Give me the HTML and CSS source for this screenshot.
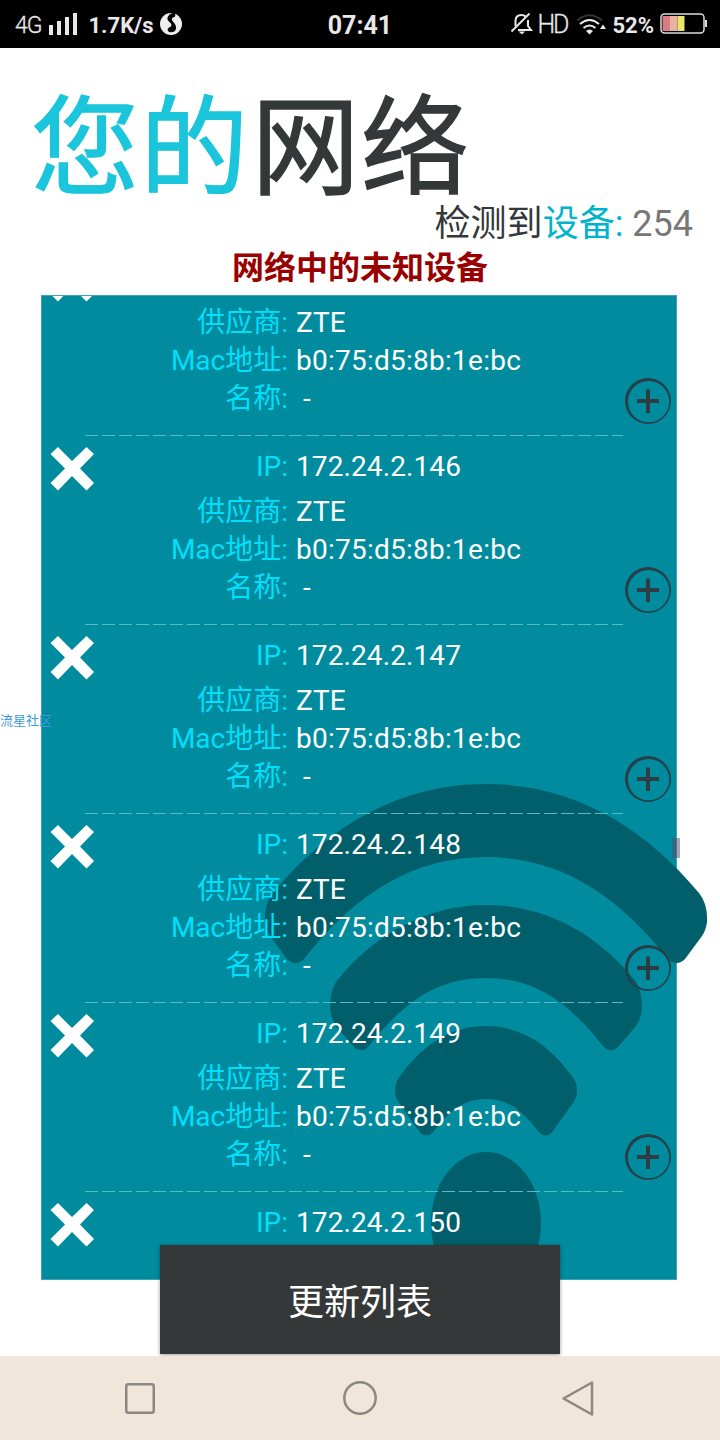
FILE: index.html
```html
<!DOCTYPE html>
<html lang="zh-CN">
<head>
  <meta charset="UTF-8">
  <meta name="viewport" content="width=device-width, initial-scale=1.0">
  <title>您的网络</title>
  <link rel="stylesheet" href="styles.css">
</head>
<body>
  <svg width="0" height="0" class="defs">
    <symbol id="cross" viewBox="0 0 44 45">
      <path d="M0.500 8L8 1L22 15L36.500 1L44 8L30 22.500L44 37L36.500 44.500L22 30L8 44.500L0.500 37L15 22.500Z" fill="#fff"/>
    </symbol>
    <symbol id="plus" viewBox="0 0 46 46">
      <path fill-rule="evenodd" d="M23 0A23 23 0 1 1 23 46A23 23 0 1 1 23 0ZM23.6 3A20.6 20.6 0 1 0 23.6 44.2A20.6 20.6 0 1 0 23.6 3Z" fill="#26404a"/>
      <path d="M21 11.5H25V21H34V25H25V35H21V25H12V21H21Z" fill="#2f3d43"/>
    </symbol>
  </svg>

  <header class="status">
    <div class="status-left">
      <span class="thin">4G</span>
      <svg class="signal" width="28" height="22" viewBox="0 0 28 22" fill="#e8e8e8">
        <path d="M0 12H4V22H0ZM8 8H12V22H8ZM16 4H20V22H16ZM24 0H28V22H24Z"/>
      </svg>
      <b class="speed">1.7K/s</b>
      <svg class="flame" width="22" height="22" viewBox="0 0 22 22">
        <circle cx="11" cy="11" r="11" fill="#eee"/>
        <path d="M12.500 0C7.500 2 6 6 9 8.500C12 11 12 13.500 10 14C8 14.500 7 16.500 8 18C10 20.500 15.500 19.500 16 15.500C16.500 12 14 10 12.500 8C11 5.500 12.500 4.500 14.500 4C15.500 3 15.500 1.500 15 0Z" fill="#000"/>
      </svg>
    </div>
    <b class="clock">07:41</b>
    <div class="status-right">
      <svg class="bell" width="22" height="22" viewBox="0 0 22 22" fill="none" stroke="#e8e8e8" stroke-width="2">
        <path d="M4.500 13V8C4.500 4 7 2 10.500 2C12 2 13.500 2.500 14.500 3.500M17 7V13L20 17H7"/>
        <path d="M0.500 18.500L18.500 0.500"/>
        <path d="M7.500 18.500H14L11 21.500Z" fill="#e8e8e8" stroke="none"/>
      </svg>
      <span class="thin hd">HD</span>
      <svg class="wifi" width="30" height="22" viewBox="0 0 30 22" fill="none" stroke="#e8e8e8" stroke-width="2">
        <path d="M1 6.500Q13.500 -4 26 6.500" stroke="#333"/>
        <path d="M4 10Q13.500 2 23 10"/>
        <path d="M7.500 14Q13.500 9 19.500 14"/>
        <path d="M10 17Q13.500 14 17 17L13.500 20.500Z" fill="#e8e8e8" stroke="none"/>
        <path d="M24 15L27 10.500L30 15Z" fill="#e8e8e8" stroke="none"/>
      </svg>
      <b class="percent">52%</b>
      <svg class="battery" width="47" height="22" viewBox="0 0 47 22">
        <rect x="1" y="1" width="43" height="19" rx="3.500" fill="none" stroke="#ddd" stroke-width="1.500"/>
        <path d="M45 7H47V14H45Z" fill="#ddd"/>
        <path d="M2.500 3H10V18H2.500Z" fill="#d97b84"/>
        <path d="M10 3H17.500V18H10Z" fill="#e8b3a2"/>
        <path d="M17.500 3H24.500V18H17.500Z" fill="#ece56c"/>
      </svg>
    </div>
  </header>

  <main class="screen">
    <h1 class="title"><span>您的</span>网络</h1>
    <p class="count">检测到<span class="accent">设备:</span> <span class="num">254</span></p>
    <h2 class="subtitle">网络中的未知设备</h2>

    <section class="panel">
      <svg class="bg-wifi" width="454" height="520" viewBox="-227 780 454 520" fill="#005f6b">
        <path d="M0 784C88 784 158 827 213 893Q222 904 221 922Q220 930 216 936L199 959Q191 967 182 959C128 890 69 857 0 857C-69 857 -128 890 -182 959Q-191 967 -199 959L-216 936Q-220 930 -221 922Q-222 904 -213 893C-158 827 -88 784 0 784Z"/>
        <path d="M0 905C60 905 113 935 150 982Q156 991 156 1009Q155 1019 150 1026L132 1047Q125 1054 117 1046C83 1003 50 978 0 978C-50 978 -83 1003 -117 1046Q-125 1054 -132 1047L-150 1026Q-155 1019 -156 1009Q-156 991 -150 982C-113 935 -60 905 0 905Z"/>
        <path d="M0 1026C34 1026 63 1044 85 1075Q91 1081 91 1091Q91 1097 87 1103L67 1131Q60 1140 52 1131C36 1110 22 1099 0 1099C-22 1099 -36 1110 -52 1131Q-60 1140 -67 1131L-87 1103Q-91 1097 -91 1091Q-91 1081 -85 1075C-63 1044 -34 1026 0 1026Z"/>
        <ellipse cx="0" cy="1223" rx="55" ry="71"/>
      </svg>
      <div class="list" id="list"></div>
      <div class="thumb"></div>
    </section>

    <button class="refresh">更新列表</button>
  </main>

  <nav class="nav">
    <svg width="36" height="38" viewBox="0 0 36 38"><rect x="4.250" y="4.250" width="27.500" height="28.500" rx="2"/></svg>
    <svg width="36" height="38" viewBox="0 0 36 38"><circle cx="19" cy="18" r="15.700"/></svg>
    <svg width="36" height="38" viewBox="0 0 36 38"><path d="M32 2.500V34.500L3.500 18.500Z"/></svg>
  </nav>

  <div class="watermark">流星社区</div>

  <script>
    const ips = ['172.24.2.145', '172.24.2.146', '172.24.2.147', '172.24.2.148', '172.24.2.149', '172.24.2.150'];

    document.getElementById('list').innerHTML = ips.map(ip => `
      <div class="device">
        <svg class="cross" width="44" height="45"><use href="#cross"/></svg>
        <dl class="fields">
          <dt class="ip">IP:</dt><dd class="ip">${ip}</dd>
          <dt>供应商:</dt><dd>ZTE</dd>
          <dt>Mac地址:</dt><dd class="mac">b0:75:d5:8b:1e:bc</dd>
          <dt>名称:</dt><dd class="name">-</dd>
        </dl>
        <svg class="plus" width="46" height="46"><use href="#plus"/></svg>
      </div>`).join('');
  </script>
</body>
</html>
```
FILE: styles.css
```css
* {
  box-sizing: border-box;
}
body {
  margin: 0;
  width: 720px;
  height: 1440px;
  display: flex;
  flex-direction: column;
  position: relative;
  overflow: hidden;
  background: #fff;
  font-family: Roboto, "Noto Sans CJK SC", sans-serif;
}
.defs {
  position: absolute;
}
h1, h2, p, dl, dd {
  margin: 0;
}

/* status bar */
.status {
  height: 48px;
  flex: none;
  display: grid;
  grid-template-columns: 1fr auto 1fr;
  align-items: center;
  padding: 2px 13px 0 15px;
  background: #000;
  color: #e8e8e8;
  font-size: 22px;
}
.status-left, .status-right {
  display: flex;
  align-items: center;
}
.status-right {
  justify-content: flex-end;
}
.thin {
  font-size: 23px;
  font-weight: 300;
  letter-spacing: -1px;
  -webkit-text-stroke: 0.3px;
}
.hd {
  font-size: 25px;
  letter-spacing: -2px;
  margin: -1px 9px 0 4px;
}
.signal {
  margin: -2px 12px 0 7px;
}
.speed {
  margin-right: 6px;
}
.clock {
  margin-right: 2px;
  font-size: 25px;
}
.wifi {
  margin-right: 6px;
}
.percent {
  margin-right: 6px;
}
.bell, .flame, .battery {
  margin-top: -3px;
}

/* content */
.screen {
  height: 1308px;
  flex: none;
  display: flex;
  flex-direction: column;
}
.title {
  height: 152px;
  padding: 23px 0 0 31px;
  font-size: 108px;
  line-height: 156px;
  font-weight: 400;
  letter-spacing: 1.3px;
  color: #343838;
  -webkit-text-stroke: 1.3px;
}
.title span {
  margin-right: 2px;
  color: #1bc5dc;
}
.count {
  padding-right: 27px;
  text-align: right;
  font-size: 36px;
  line-height: 48px;
  color: #343838;
}
.accent {
  color: #00b4cc;
}
.num {
  color: #777;
}
.subtitle {
  height: 47px;
  text-align: center;
  font-size: 32px;
  line-height: 41px;
  color: #990000;
}
.panel {
  position: relative;
  width: 636px;
  height: 985px;
  margin-left: 41px;
  flex: none;
  border: 1px solid #3fa5b3;
  background: #008c9e;
}
.bg-wifi {
  position: absolute;
  left: 217px;
  top: 484px;
}
.list {
  position: relative;
  height: 983px;
  overflow: hidden;
}
.device {
  height: 189px;
  display: flex;
  justify-content: space-between;
  padding: 10px 5px 0 8px;
  background: repeating-linear-gradient(90deg, #58bac5 0 13px, transparent 13px 17px) 43px 188px / 538px 1px no-repeat;
}
.device:first-child {
  margin-top: -49px;
}
.cross, .plus {
  flex: none;
}
.plus {
  margin-top: 121px;
}
.fields {
  flex: 1;
  display: grid;
  grid-template-columns: 194px 1fr;
  align-content: start;
  column-gap: 8px;
  padding-top: 2px;
  font-size: 28px;
  line-height: 38px;
}
.fields dt {
  text-align: right;
  color: #00dffc;
}
.fields dd {
  color: #fff;
  letter-spacing: 0.1px;
}
.fields .mac {
  letter-spacing: 0.25px;
}
.fields .ip {
  margin-bottom: 7px;
}
.name {
  padding-left: 7px;
}
.thumb {
  position: absolute;
  left: 630px;
  top: 542px;
  width: 8px;
  height: 20px;
  background: rgba(90, 70, 100, 0.5);
}
.refresh {
  position: relative;
  width: 400px;
  height: 109px;
  margin: -35px auto 0;
  padding: 0 0 2px;
  flex: none;
  border: none;
  background: #343838;
  box-shadow: 0 1px 4px rgba(0, 0, 0, 0.4);
  color: #fff;
  font-family: inherit;
  font-size: 36px;
}

/* navigation bar */
.nav {
  position: relative;
  flex: 1;
  display: flex;
  justify-content: space-between;
  align-items: center;
  padding: 1px 124px 0 122px;
  background: #f1e6da;
}
.nav svg {
  fill: none;
  stroke: #8d8784;
  stroke-width: 2.5;
  stroke-linejoin: round;
}

.watermark {
  position: absolute;
  left: 0;
  top: 712px;
  font-size: 13px;
  line-height: 18px;
  color: #3d9be0;
}
```
